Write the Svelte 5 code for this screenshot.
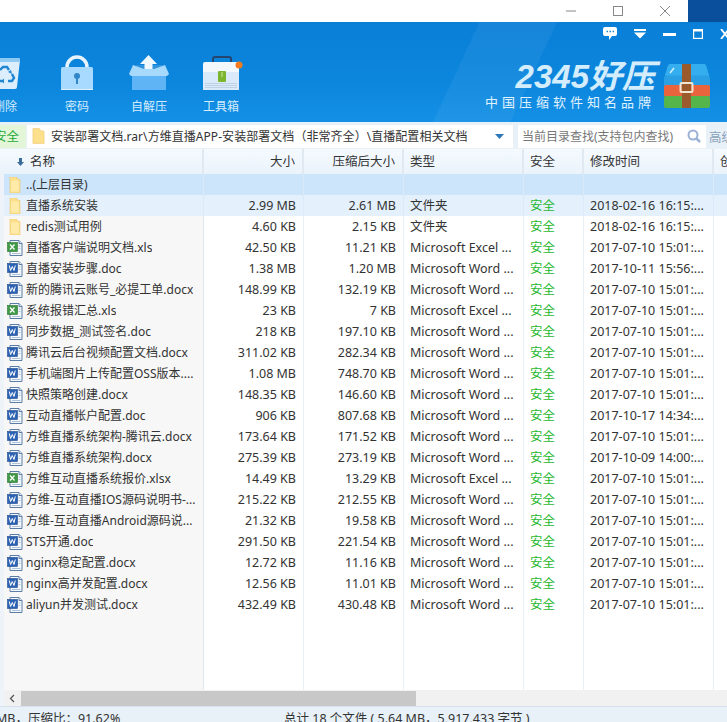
<script>
  const rows = [
    { name: '..(上层目录)', icon: 'folder', up: true },
    { name: '直播系统安装', icon: 'folder', size: '2.99 MB', packed: '2.61 MB', type: '文件夹', time: '2018-02-16 16:15:...', hover: true },
    { name: 'redis测试用例', icon: 'folder', size: '4.60 KB', packed: '2.15 KB', type: '文件夹', time: '2018-02-16 16:15:...' },
    { name: '直播客户端说明文档.xls', icon: 'xls', size: '42.50 KB', packed: '11.21 KB', type: 'Microsoft Excel ...', time: '2017-07-10 15:01:...' },
    { name: '直播安装步骤.doc', icon: 'doc', size: '1.38 MB', packed: '1.20 MB', type: 'Microsoft Word ...', time: '2017-10-11 15:56:...' },
    { name: '新的腾讯云账号_必提工单.docx', icon: 'doc', size: '148.99 KB', packed: '132.19 KB', type: 'Microsoft Word ...', time: '2017-07-10 15:01:...' },
    { name: '系统报错汇总.xls', icon: 'xls', size: '23 KB', packed: '7 KB', type: 'Microsoft Excel ...', time: '2017-07-10 15:01:...' },
    { name: '同步数据_测试签名.doc', icon: 'doc', size: '218 KB', packed: '197.10 KB', type: 'Microsoft Word ...', time: '2017-07-10 15:01:...' },
    { name: '腾讯云后台视频配置文档.docx', icon: 'doc', size: '311.02 KB', packed: '282.34 KB', type: 'Microsoft Word ...', time: '2017-07-10 15:01:...' },
    { name: '手机端图片上传配置OSS版本....', icon: 'doc', size: '1.08 MB', packed: '748.70 KB', type: 'Microsoft Word ...', time: '2017-07-10 15:01:...' },
    { name: '快照策略创建.docx', icon: 'doc', size: '148.35 KB', packed: '146.60 KB', type: 'Microsoft Word ...', time: '2017-07-10 15:01:...' },
    { name: '互动直播帐户配置.doc', icon: 'doc', size: '906 KB', packed: '807.68 KB', type: 'Microsoft Word ...', time: '2017-10-17 14:34:...' },
    { name: '方维直播系统架构-腾讯云.docx', icon: 'doc', size: '173.64 KB', packed: '171.52 KB', type: 'Microsoft Word ...', time: '2017-07-10 15:01:...' },
    { name: '方维直播系统架构.docx', icon: 'doc', size: '275.39 KB', packed: '273.19 KB', type: 'Microsoft Word ...', time: '2017-10-09 14:00:...' },
    { name: '方维互动直播系统报价.xlsx', icon: 'xls', size: '14.49 KB', packed: '13.29 KB', type: 'Microsoft Excel ...', time: '2017-07-10 15:01:...' },
    { name: '方维-互动直播IOS源码说明书-...', icon: 'doc', size: '215.22 KB', packed: '212.55 KB', type: 'Microsoft Word ...', time: '2017-07-10 15:01:...' },
    { name: '方维-互动直播Android源码说...', icon: 'doc', size: '21.32 KB', packed: '19.58 KB', type: 'Microsoft Word ...', time: '2017-07-10 15:01:...' },
    { name: 'STS开通.doc', icon: 'doc', size: '291.50 KB', packed: '221.54 KB', type: 'Microsoft Word ...', time: '2017-07-10 15:01:...' },
    { name: 'nginx稳定配置.docx', icon: 'doc', size: '12.72 KB', packed: '11.16 KB', type: 'Microsoft Word ...', time: '2017-07-10 15:01:...' },
    { name: 'nginx高并发配置.docx', icon: 'doc', size: '12.56 KB', packed: '11.01 KB', type: 'Microsoft Word ...', time: '2017-07-10 15:01:...' },
    { name: 'aliyun并发测试.docx', icon: 'doc', size: '432.49 KB', packed: '430.48 KB', type: 'Microsoft Word ...', time: '2017-07-10 15:01:...' }
  ];
</script>

{#snippet fileIcon(kind)}
  {#if kind === 'folder'}
    <svg class="ficon" viewBox="0 0 16 16">
      <path d="M3 0h6.500l1 2 2.500 .5v13.500h-10z" fill="#fde08c" stroke="#ecc66c" stroke-width=".6" />
      <rect x="4" y="3.500" width="8" height="11" fill="#ffeaa8" />
    </svg>
  {:else}
    <svg class="ficon" viewBox="0 0 16 16">
      <path d="M3 .5h9l3 3v12h-12z" fill="#f4f8fc" stroke="#5c7ea6" />
      <path d="M12 .5v3h3" fill="#dbe7f3" stroke="#5c7ea6" />
      <rect x=".5" y="2.500" width="10" height="9" fill={kind === 'xls' ? '#3f9a46' : '#2c62b4'} stroke={kind === 'xls' ? '#2a7431' : '#1e4a92'} stroke-width=".6" />
      {#if kind === 'xls'}
        <path d="M3 4.500l4.500 5M7.500 4.500l-4.500 5" stroke="#fff" stroke-width="1.300" />
      {:else}
        <path d="M2.300 4.500l1.300 5 1.700-4 1.700 4 1.300-5" fill="none" stroke="#fff" stroke-width="1" />
      {/if}
      <path d="M11.500 6h2M11.500 8.500h2M5 13.500h8.500" stroke="#9db4cf" stroke-width=".8" />
    </svg>
  {/if}
{/snippet}

<div class="app">
  <div class="titlebar">
    <div class="wincontrols">
      <svg width="12" height="12" viewBox="0 0 12 12"><path d="M1 6h10" stroke="#888" /></svg>
      <svg width="12" height="12" viewBox="0 0 12 12"><rect x="1.500" y="1.500" width="9" height="9" fill="none" stroke="#888" /></svg>
      <svg width="12" height="12" viewBox="0 0 12 12"><path d="M1 1l10 10M11 1l-10 10" stroke="#888" /></svg>
    </div>
    <div class="desktop"></div>
  </div>

  <header class="banner">
    <div class="topicons">
      <svg width="14" height="13" viewBox="0 0 14 13"><path d="M2 0h10a2 2 0 0 1 2 2v5a2 2 0 0 1-2 2h-3l-3 4v-4h-4a2 2 0 0 1-2-2v-5a2 2 0 0 1 2-2z" fill="#fff" /><path d="M3.500 4.500h1.500M6.500 4.500h1.500M9.500 4.500h1.500" stroke="#1a86d8" stroke-width="1.500" /></svg>
      <svg width="12" height="10" viewBox="0 0 12 10"><path d="M0 0h12v2h-12zM0 3.500h12l-6 6z" fill="#fff" /></svg>
      <svg width="13" height="4" viewBox="0 0 13 4"><rect width="13" height="3" y="1" fill="#fff" /></svg>
      <svg width="10" height="10" viewBox="0 0 10 10"><rect x=".6" y="1" width="8.800" height="8.400" fill="none" stroke="#fff" stroke-width="1.200" /><rect x="0" y="0" width="10" height="2.500" fill="#fff" /></svg>
      <svg width="10" height="10" viewBox="0 0 10 10"><path d="M1 0l8 10M9 0l-8 10" stroke="#fff" stroke-width="1.800" /></svg>
    </div>

    <nav class="tools">
      <div class="tool">
        <svg width="44" height="44" viewBox="0 0 44 44">
          <path d="M-4 5h41l-3 27a2 2 0 0 1-2 2h-36z" fill="#dcedfb" />
          <path d="M-4 3h41l-.6 4h-40.400z" fill="#8fcaf3" />
          <path d="M17 15l3-3h4l2 3M29 19l2 4-2 3h-4M19 26h-4l-1-3 2-4" fill="none" stroke="#1f86d4" stroke-width="2.400" />
          <path d="M25 17l3-2 1 4zM21 23.500v5l-3-2.500zM13 19l4-1 0 4z" fill="#1f86d4" />
        </svg>
        <span>删除</span>
      </div>
      <div class="tool">
        <svg width="44" height="44" viewBox="0 0 44 44">
          <path d="M12 13v-1a10 10 0 0 1 20 0v1" fill="none" stroke="#e7f4fe" stroke-width="3.500" />
          <rect x="6" y="12" width="32" height="23" rx="1.500" fill="#a8daff" />
          <circle cx="22" cy="21" r="3" fill="#2f86c9" />
          <rect x="21" y="22" width="2" height="7" fill="#2f86c9" />
          <rect x="6" y="34" width="32" height="1" fill="#dff0fe" />
        </svg>
        <span>密码</span>
      </div>
      <div class="tool">
        <svg width="44" height="44" viewBox="0 0 44 44">
          <path d="M9 10h26l7 10h-40z" fill="#2f93de" />
          <rect x="5" y="19" width="34" height="16" fill="#5fb4f6" />
          <path d="M21.500 0l8.500 9h-4.500v8h-8v-8h-4.500z" fill="#f0f8ff" />
          <path d="M2 19l4-9 11 4h10l11-4 4 9-2 2h-36z" fill="#a6d9fb" />
        </svg>
        <span>自解压</span>
      </div>
      <div class="tool">
        <svg width="44" height="44" viewBox="0 0 44 44">
          <path d="M14 7v-3a2 2 0 0 1 2-2h14a2 2 0 0 1 2 2v3" fill="none" stroke="#24466e" stroke-width="2" />
          <path d="M4 9a2 2 0 0 1 2-2h34v10h-36z" fill="#f3f8fd" />
          <rect x="4" y="17" width="36" height="18" fill="#dbeafa" />
          <rect x="19" y="16" width="8" height="11" rx="1" fill="#7cb62c" />
          <rect x="22.500" y="17" width="1" height="5" fill="#cfe6a0" />
          <path d="M6 28.500h32M6 30.500h32M6 32.500h32" stroke="#b6cadf" stroke-width=".8" />
          <circle cx="40" cy="10" r="3.500" fill="#f47b20" />
        </svg>
        <span>工具箱</span>
      </div>
    </nav>

    <div class="brand">
      <div class="brandtext">
        <div class="brandname">2345好压</div>
        <div class="slogan">中国压缩软件知名品牌</div>
      </div>
      <svg width="46" height="44" viewBox="0 0 46 44">
        <path d="M6 0h34q1.500 0 2 1.500l4 13v8h-46v-8l4-13q.5-1.500 2-1.500z" fill="#2a9fe4" />
        <path d="M6 0h34q1.500 0 2 1.500l3 10h-44l3-10q.5-1.500 2-1.500z" fill="#35aef0" />
        <rect y="21" width="46" height="12" rx="2" fill="#e9633c" />
        <rect y="32" width="46" height="12" rx="2" fill="#55b54a" />
        <path d="M10 4l-4 5" stroke="#d5f0fc" stroke-width="1.500" />
        <rect x="18" y="0" width="9" height="44" fill="#9a5a2c" />
        <rect x="16.500" y="19" width="12" height="9" rx="1" fill="none" stroke="#f2e6d0" stroke-width="2" />
      </svg>
    </div>
  </header>

  <div class="addressbar">
    <div class="safe">安全</div>
    <div class="path">
      <svg class="pathfolder" viewBox="0 0 14 16"><path d="M1 0h7l1 2 4 1v13h-12z" fill="#fde08c" stroke="#ecc66c" stroke-width=".6" /></svg>
      <span class="pathtext">安装部署文档.rar\方维直播APP-安装部署文档（非常齐全）\直播配置相关文档</span>
      <svg class="caret" width="9" height="5" viewBox="0 0 9 5"><path d="M0 0h9l-4.500 5z" fill="#2c78b8" /></svg>
    </div>
    <div class="search">
      <span>当前目录查找(支持包内查找)</span>
      <svg width="14" height="14" viewBox="0 0 14 14"><circle cx="6" cy="6" r="4.500" fill="none" stroke="#9bb1d6" stroke-width="2" /><path d="M9 9l4 4" stroke="#9bb1d6" stroke-width="2.500" /></svg>
    </div>
    <span class="advanced">高级</span>
  </div>

  <div class="list">
    <div class="row head">
      <div class="cell name">
        <svg class="sort" width="7" height="8" viewBox="0 0 7 8"><path d="M2 0h3v4h2l-3.500 4-3.500-4h2z" fill="#3a6d98" /></svg>
        名称
      </div>
      <div class="cell num">大小</div>
      <div class="cell num">压缩后大小</div>
      <div class="cell">类型</div>
      <div class="cell">安全</div>
      <div class="cell">修改时间</div>
      <div class="cell">创建时间</div>
    </div>

    <div class="rows">
      {#each rows as r}
        <div class="row" class:up={r.up} class:hover={r.hover}>
          <div class="cell name">{@render fileIcon(r.icon)}<span class="fname">{r.name}</span></div>
          <div class="cell num">{r.size ?? ''}</div>
          <div class="cell num">{r.packed ?? ''}</div>
          <div class="cell">{r.type ?? ''}</div>
          <div class="cell ok">{r.up ? '' : '安全'}</div>
          <div class="cell">{r.time ?? ''}</div>
          <div class="cell"></div>
        </div>
      {/each}
      <div class="row filler">
        <div class="cell name"></div>
        <div class="cell"></div><div class="cell"></div><div class="cell"></div><div class="cell"></div><div class="cell"></div><div class="cell"></div>
      </div>
    </div>

    <div class="hscroll">
      <svg width="6" height="9" viewBox="0 0 6 9"><path d="M5 1l-3.500 3.500 3.500 3.500" fill="none" stroke="#555" stroke-width="1.300" /></svg>
      <div class="thumb"></div>
    </div>
  </div>

  <footer class="status">
    <span class="ratio">MB，压缩比：91.62%</span>
    <span class="total">总计 18 个文件 ( 5.64 MB，5,917,433 字节 )</span>
  </footer>
</div>

<style>
  :global(body) {
    margin: 0;
    overflow: hidden;
  }

  .app {
    width: 727px;
    height: 722px;
    overflow: hidden;
    display: flex;
    flex-direction: column;
    background: #eef4fa;
    font-family: "Noto Sans", "Noto Sans CJK SC", sans-serif;
    font-size: 12.5px;
    color: #333;
  }

  .titlebar {
    height: 22px;
    flex: none;
    background: #fff;
    display: flex;
    justify-content: flex-end;
  }
  .wincontrols {
    display: flex;
    align-items: center;
    gap: 35px;
    padding-right: 17px;
  }
  .desktop {
    width: 39px;
    background: #0a4f9c;
  }

  .banner {
    height: 100px;
    flex: none;
    position: relative;
    background:
      linear-gradient(115deg, transparent 62%, rgba(255,255,255,.05) 62%, rgba(255,255,255,.05) 72%, transparent 72%),
      linear-gradient(180deg, #0a7fd8 0%, #0c86dd 60%, #1490e6 100%);
    display: flex;
    justify-content: space-between;
    overflow: hidden;
  }
  .topicons {
    position: absolute;
    top: 5px;
    right: -3px;
    display: flex;
    align-items: center;
    gap: 17px;
  }

  .tools {
    display: flex;
    margin-left: -18px;
    padding-top: 33px;
    gap: 26px;
  }
  .tool {
    width: 46px;
    display: flex;
    flex-direction: column;
    align-items: center;
    color: #d5ecfd;
    font-size: 12px;
    line-height: 18px;
  }
  .tool svg {
    display: block;
    flex: none;
    overflow: visible;
  }
  .tool span {
    margin-top: -1px;
  }

  .brand {
    display: flex;
    align-items: flex-end;
    gap: 11px;
    padding: 0 17px 14px 0;
  }
  .brandtext {
    text-align: right;
    margin-right: -2px;
    margin-bottom: -2px;
  }
  .brandname {
    font-family: "Liberation Sans", "Noto Sans CJK SC", sans-serif;
    font-size: 33px;
    font-weight: 700;
    font-style: italic;
    line-height: 28px;
    color: #d4edfd;
    letter-spacing: 0;
    white-space: nowrap;
  }
  .slogan {
    margin-top: 3px;
    font-size: 13px;
    line-height: 16px;
    letter-spacing: 4px;
    color: #e0f2fe;
    font-family: "Noto Sans CJK SC", sans-serif;
    white-space: nowrap;
  }

  .addressbar {
    height: 27px;
    flex: none;
    display: flex;
    align-items: center;
    background: #e8f1f8;
    padding-top: 1px;
    box-sizing: border-box;
  }
  .safe {
    width: 32px;
    margin-left: -6px;
    height: 23px;
    line-height: 23px;
    background: #e4f6d8;
    color: #27a83a;
    padding-right: 0;
    overflow: hidden;
    white-space: nowrap;
    flex: none;
  }
  .path {
    width: 486px;
    height: 23px;
    margin-left: 1px;
    background: #fff;
    display: flex;
    align-items: center;
    flex: none;
    box-sizing: border-box;
    padding: 0 9px 0 5px;
  }
  .pathfolder {
    width: 13px;
    height: 16px;
    flex: none;
  }
  .pathtext {
    flex: 1;
    margin-left: 6px;
    white-space: nowrap;
    overflow: hidden;
    font-size: 12px;
    letter-spacing: .05px;
  }
  .search {
    width: 188px;
    height: 23px;
    margin-left: 5px;
    background: #fff;
    flex: none;
    display: flex;
    align-items: center;
    justify-content: space-between;
    padding: 0 5px 0 4px;
    box-sizing: border-box;
    color: #777;
    font-size: 12px;
  }
  .advanced {
    margin-left: 3px;
    color: #8aa0b8;
    white-space: nowrap;
  }

  .list {
    flex: 1;
    display: flex;
    flex-direction: column;
    min-height: 0;
  }
  .row {
    display: grid;
    grid-template-columns: 200px 100px 100px 120px 60px 130px 100px;
    width: 814px;
    margin-left: 4px;
    height: 21px;
    line-height: 21px;
    flex: none;
  }
  .cell {
    padding: 0 6px;
    white-space: nowrap;
    overflow: hidden;
    border-right: 1px solid #e8eff6;
    box-sizing: border-box;
  }
  .cell.num {
    text-align: right;
    padding-right: 7px;
  }
  .cell.name {
    display: flex;
    align-items: center;
    padding: 0 0 0 3px;
    background: #f7f7f7;
    border-right: 1px solid #dfe8f0;
    font-size: 12px;
  }
  .cell.ok {
    color: #1fb82e;
  }

  .head {
    height: 25px;
    line-height: 25px;
    background: linear-gradient(180deg, #f5fafe, #eaf3fb);
    margin-left: 0;
    padding-left: 4px;
    box-sizing: content-box;
    color: #333;
  }
  .head .cell {
    border-right: 2px solid #e0e9f2;
  }
  .head .cell.name {
    background: none;
    padding-left: 13px;
    gap: 6px;
    font-size: 12.5px;
  }
  .sort {
    flex: none;
  }

  .rows {
    flex: 1;
    min-height: 0;
    display: flex;
    flex-direction: column;
    background: #fff;
    box-shadow: inset 4px 0 0 #edf3f9;
    overflow: hidden;
  }
  .filler {
    flex: 1;
  }
  .up {
    background: #cce5fb;
  }
  .up .cell, .hover .cell {
    background: transparent;
    border-right-color: #dbeafa;
  }
  .hover {
    background: #e4f1fc;
  }
  .ficon {
    width: 16px;
    height: 16px;
    flex: none;
    margin-right: 3px;
  }
  .fname {
    overflow: hidden;
  }

  .hscroll {
    height: 16px;
    flex: none;
    background: #f1f1f1;
    display: flex;
    align-items: center;
    margin-left: 4px;
    padding-left: 5px;
  }
  .thumb {
    width: 395px;
    height: 15px;
    margin-left: 6px;
    background: #c8c8c8;
  }

  .status {
    height: 15px;
    flex: none;
    background: #e8f1f8;
    border-top: 1px solid #d6e3ee;
    position: relative;
    overflow: hidden;
    font-size: 12.5px;
    line-height: 20px;
    white-space: nowrap;
  }
  .ratio {
    position: absolute;
    left: -4px;
    top: 2px;
  }
  .total {
    position: absolute;
    left: 284px;
    top: 2px;
  }
</style>
